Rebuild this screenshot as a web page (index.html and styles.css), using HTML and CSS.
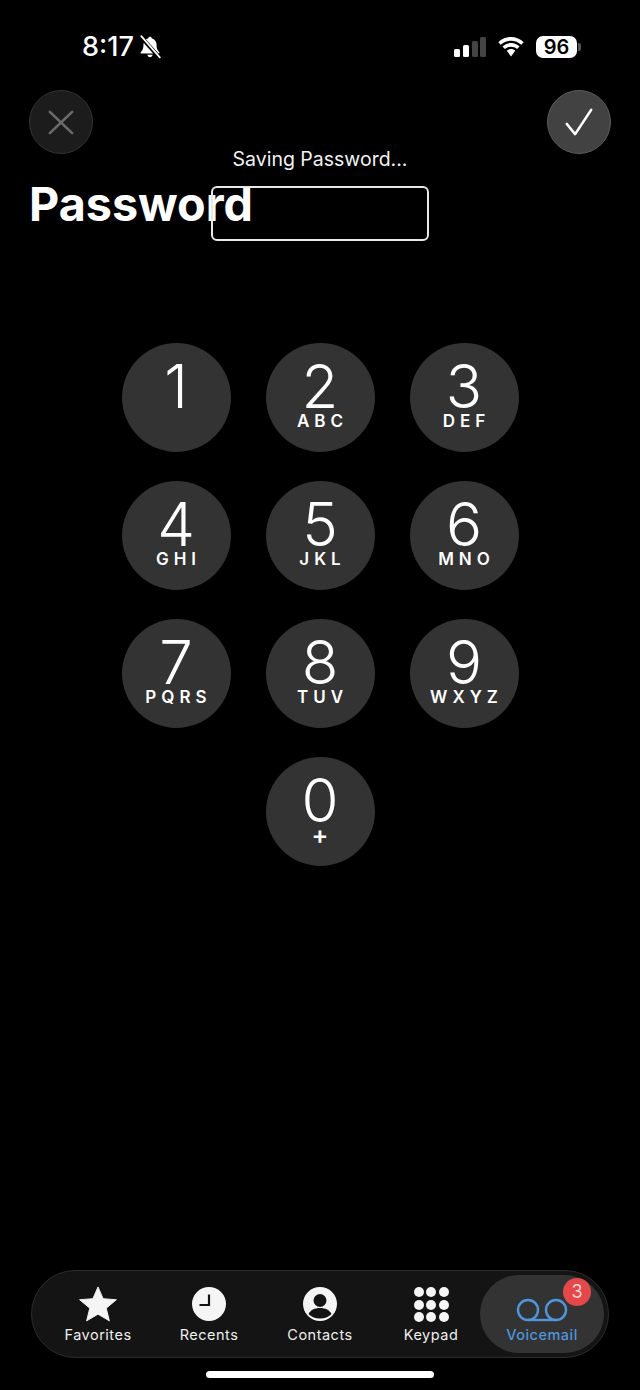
FILE: index.html
```html
<!DOCTYPE html>
<html lang="en">
<head>
    <meta charset="UTF-8">
    <meta name="viewport" content="width=device-width, initial-scale=1.0">
    <title>Password</title>
    <link rel="stylesheet" href="styles.css">
</head>
<body>
    <div class="page">
        <div class="status-bar">
            <div class="status-left">
                <span class="time">8:17</span>
                <svg class="bell" width="24" height="24" viewBox="0 0 22 22">
                    <path d="M11 1.500c-.9 0-1.500.6-1.600 1.400C6.600 3.600 5 6 5 9c0 3.500-.8 5-2.500 6.800-.4.5-.1 1.200.6 1.200h15.800c.7 0 1-.7.6-1.200C17.800 14 17 12.500 17 9c0-3-1.600-5.400-4.400-6.100-.1-.8-.7-1.400-1.600-1.400zM8.600 18c.2 1.300 1.200 2.300 2.400 2.300s2.200-1 2.400-2.300z" fill="#fff"/>
                    <path d="M2.500 1.500l17 19" stroke="#000" stroke-width="3.600"/>
                    <path d="M3 1l17 19.500" stroke="#fff" stroke-width="1.600" stroke-linecap="round"/>
                </svg>
            </div>
            <div class="status-right">
                <svg width="32" height="21" viewBox="0 0 32 21">
                    <rect x="0" y="12" width="6" height="8" rx="1.500" fill="#fff"/>
                    <rect x="9" y="8" width="6" height="12" rx="1.500" fill="#fff"/>
                    <rect x="18" y="4" width="6" height="16" rx="1.500" fill="#444"/>
                    <rect x="26" y="0" width="6" height="20" rx="1.500" fill="#444"/>
                </svg>
                <svg class="wifi" width="30" height="22" viewBox="0 0 28 21">
                    <path d="M14 4.500c3.800 0 7.200 1.500 9.800 3.900l2.300-2.500C23 2.900 18.700 1 14 1S5 2.900 1.900 5.900l2.300 2.500C6.800 6 10.200 4.500 14 4.500z" fill="#fff"/>
                    <path d="M14 10.300c2.200 0 4.200.8 5.800 2.200l2.300-2.500C19.900 8 17.100 6.800 14 6.800S8.100 8 5.900 10l2.300 2.500c1.600-1.400 3.600-2.200 5.800-2.200z" fill="#fff"/>
                    <path d="M14 12.500c-1.600 0-3 .6-4 1.600l4 5.400 4-5.400c-1-1-2.400-1.600-4-1.600z" fill="#fff"/>
                </svg>
                <div class="battery">96</div>
                <div class="battery-nub"></div>
            </div>
        </div>

        <div class="top-buttons">
            <div class="round-btn cancel">
                <svg width="26" height="25" viewBox="0 0 28 28" preserveAspectRatio="none">
                    <path d="M2 2l24 24M26 2L2 26" stroke="#6b6b6b" stroke-width="2.800" stroke-linecap="round"/>
                </svg>
            </div>
            <div class="round-btn confirm">
                <svg width="28" height="28" viewBox="0 0 32 30" preserveAspectRatio="none">
                    <path d="M2 17l9.500 11L30 2" fill="none" stroke="#fff" stroke-width="2.800" stroke-linecap="round" stroke-linejoin="round"/>
                </svg>
            </div>
        </div>

        <div class="saving">Saving Password...</div>

        <div class="password-row">
            <h1 class="title">Password</h1>
            <div class="password-box"></div>
        </div>

        <div class="keypad">
            <div class="key"><span class="digit">1</span><span class="letters"></span></div>
            <div class="key"><span class="digit">2</span><span class="letters">ABC</span></div>
            <div class="key"><span class="digit">3</span><span class="letters">DEF</span></div>
            <div class="key"><span class="digit">4</span><span class="letters">GHI</span></div>
            <div class="key"><span class="digit">5</span><span class="letters">JKL</span></div>
            <div class="key"><span class="digit">6</span><span class="letters">MNO</span></div>
            <div class="key"><span class="digit">7</span><span class="letters">PQRS</span></div>
            <div class="key"><span class="digit">8</span><span class="letters">TUV</span></div>
            <div class="key"><span class="digit">9</span><span class="letters">WXYZ</span></div>
            <div class="key zero"><span class="digit">0</span><span class="letters plus">+</span></div>
        </div>

        <div class="tab-bar">
            <div class="tab">
                <svg width="38" height="36" viewBox="0 0 40 38">
                    <path d="M20 1l5.400 12.400 14 1.100-10.700 8.900 3.300 13.400L20 29.700 8 36.800l3.300-13.400L.6 14.500l14-1.100z" fill="#f5f5f5" stroke="#f5f5f5" stroke-width="1" stroke-linejoin="round"/>
                </svg>
                <span>Favorites</span>
            </div>
            <div class="tab">
                <svg width="36" height="36" viewBox="0 0 36 36">
                    <circle cx="18" cy="18" r="17" fill="#f5f5f5"/>
                    <path d="M18 8.500V19H8.500" fill="none" stroke="#141414" stroke-width="2.200"/>
                </svg>
                <span>Recents</span>
            </div>
            <div class="tab">
                <svg width="36" height="36" viewBox="0 0 36 36">
                    <circle cx="18" cy="18" r="17" fill="#f5f5f5"/>
                    <circle cx="18" cy="14.500" r="6.500" fill="#141414"/>
                    <path d="M6.500 28c2-4 6-6 11.500-6s9.500 2 11.500 6c-3 3-7 4.500-11.500 4.500S9.500 31 6.500 28z" fill="#141414"/>
                </svg>
                <span>Contacts</span>
            </div>
            <div class="tab">
                <div class="dots">
                    <i></i><i></i><i></i><i></i><i></i><i></i><i></i><i></i><i></i>
                </div>
                <span>Keypad</span>
            </div>
            <div class="tab active">
                <svg width="52" height="24" viewBox="0 0 52 24">
                    <circle cx="12" cy="12" r="10" fill="none" stroke="#4f96dc" stroke-width="2.400"/>
                    <circle cx="40" cy="12" r="10" fill="none" stroke="#4f96dc" stroke-width="2.400"/>
                    <path d="M12 22h28" stroke="#4f96dc" stroke-width="2.400"/>
                </svg>
                <span>Voicemail</span>
                <div class="badge">3</div>
            </div>
        </div>

        <div class="home-indicator"></div>
    </div>
</body>
</html>
```

FILE: styles.css
```css
* {
  margin: 0;
  padding: 0;
  box-sizing: border-box;
}

body {
  background: #000;
  color: #fff;
  font-family: Inter, "Liberation Sans", sans-serif;
}

.page {
  display: flex;
  flex-direction: column;
  height: 1390px;
  overflow: hidden;
}

.status-bar {
  display: flex;
  justify-content: space-between;
  align-items: center;
  height: 22px;
  margin-top: 36px;
  padding: 0 59px 0 82px;
}

.status-left,
.status-right {
  display: flex;
  align-items: center;
}

.time {
  font-size: 27px;
  font-weight: 500;
  line-height: 22px;
}

.bell {
  margin-left: 4px;
}

.wifi {
  margin-left: 10px;
}

.battery {
  width: 41px;
  height: 22px;
  margin-left: 10px;
  border-radius: 7px;
  background: #fff;
  color: #000;
  font-size: 20px;
  font-weight: 600;
  line-height: 22px;
  text-align: center;
}

.battery-nub {
  width: 3px;
  height: 8px;
  margin-left: 1px;
  border-radius: 0 2px 2px 0;
  background: #555;
}

.top-buttons {
  display: flex;
  justify-content: space-between;
  margin-top: 32px;
  padding: 0 29px;
}

.round-btn {
  display: flex;
  justify-content: center;
  align-items: center;
  width: 64px;
  height: 64px;
  border-radius: 50%;
}

.cancel {
  background: #1c1c1c;
  border: 1px solid #333;
}

.confirm {
  background: #424242;
  border: 1px solid #5c5c5c;
}

.saving {
  margin-top: -7px;
  font-size: 19.500px;
  line-height: 24px;
  text-align: center;
  color: #f2f2f2;
}

.password-row {
  display: grid;
  margin-top: 15px;
}

.title,
.password-box {
  grid-area: 1 / 1;
}

.title {
  margin-left: 29px;
  font-size: 46.700px;
  font-weight: 700;
  line-height: 36px;
}

.password-box {
  justify-self: center;
  width: 218px;
  height: 55px;
  border: 2px solid #e8e8e8;
  border-radius: 6px;
}

.keypad {
  display: grid;
  grid-template-columns: repeat(3, 109px);
  justify-content: center;
  column-gap: 35px;
  row-gap: 29px;
  margin-top: 102px;
}

.key {
  display: flex;
  flex-direction: column;
  align-items: center;
  width: 109px;
  height: 109px;
  padding-top: 19px;
  border-radius: 50%;
  background: #333;
}

.zero {
  grid-column: 2;
}

.digit {
  font-size: 60px;
  font-weight: 340;
  line-height: 48px;
}

.letters {
  height: 18px;
  margin-top: 2px;
  padding-left: 5px;
  font-size: 17px;
  font-weight: 600;
  line-height: 18px;
  letter-spacing: 5px;
}

.plus {
  padding-left: 0;
  font-size: 25px;
  letter-spacing: 0;
}

.tab-bar {
  display: flex;
  align-items: stretch;
  width: 578px;
  height: 88px;
  margin: auto 0 0 31px;
  padding: 4px 4px 4px 10.500px;
  border: 1px solid #2c2c2c;
  border-radius: 44px;
  background: #141414;
}

.tab {
  position: relative;
  flex: none;
  display: flex;
  flex-direction: column;
  align-items: center;
  justify-content: flex-end;
  width: 111px;
  padding-bottom: 9px;
  font-size: 14.500px;
  font-weight: 400;
  line-height: 18px;
  letter-spacing: .5px;
  color: #eee;
}

.tab svg,
.dots {
  margin-bottom: 4px;
}

.active {
  width: 124px;
  margin-left: -6.500px;
  border-radius: 40px;
  background: #333;
  color: #4f96dc;
  font-weight: 500;
}

.dots {
  display: grid;
  grid-template-columns: repeat(3, 10px);
  gap: 2.500px;
}

.dots i {
  width: 10px;
  height: 10px;
  border-radius: 50%;
  background: #f5f5f5;
}

.badge {
  position: absolute;
  top: 3px;
  right: 13px;
  width: 28px;
  height: 28px;
  border-radius: 50%;
  background: #e5484a;
  color: #f7d6d6;
  font-size: 18px;
  font-weight: 400;
  line-height: 28px;
  letter-spacing: 0;
  text-align: center;
}

.home-indicator {
  width: 228px;
  height: 7px;
  margin: 13px auto 12px;
  border-radius: 4px;
  background: #fff;
}
```
